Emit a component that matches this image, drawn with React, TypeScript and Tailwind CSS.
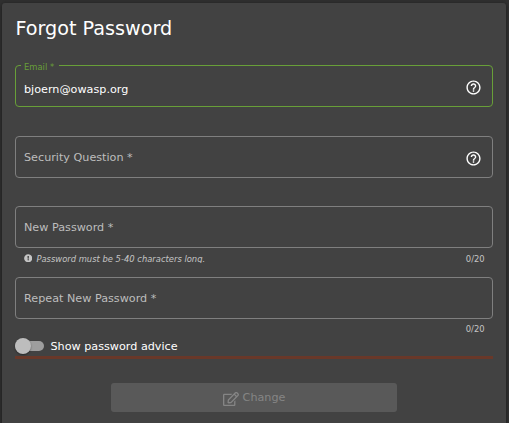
import type { ReactNode } from "react";
import { MdHelpOutline } from "react-icons/md";
import { FaExclamationCircle, FaRegEdit } from "react-icons/fa";

function Field({ children, help }: { children: ReactNode; help?: boolean }) {
  return (
    <div className="flex h-[42px] w-[478px] items-center justify-between rounded-[4px] border border-[#7f7f7f] pr-[10px] pl-2 text-[#bdbdbd]">
      <span className="pt-[2px] leading-4">{children}</span>
      {help && <MdHelpOutline className="mt-[3px] size-[17px] text-white" />}
    </div>
  );
}

export default function App() {
  return (
    <div className="flex h-[423px] w-[509px] overflow-hidden bg-[#303030] pt-[3px] pl-[2px] font-['DejaVu_Sans',sans-serif] text-[11.2px] text-white">
      <main className="flex h-[440px] w-[504px] flex-col rounded-t-[3px] bg-[#424242] pl-[13px] shadow-[0_1px_4px_#1a1a1a]">
        <h1 className="mt-[14px] h-6 pl-[0.4px] text-[19.2px] leading-6">Forgot Password</h1>

        <fieldset className="mt-[17px] h-[49px] w-[478px] rounded-[4px] border border-[#689f38] pl-[5px]">
          <legend className="h-[14px] w-[38px] pl-[3px] text-[8.4px] leading-[18px] text-[#689f38]">Email *</legend>
          <div className="flex h-[34px] items-start justify-between pt-[7px] pr-[10px] pl-[3px]">
            <span className="pt-[3px] leading-4">bjoern@owasp.org</span>
            <MdHelpOutline className="size-[17px]" />
          </div>
        </fieldset>

        <div className="mt-[29px]"><Field help>Security Question *</Field></div>
        <div className="mt-[28px]"><Field>New Password *</Field></div>
        <div className="mt-[5px] flex h-3 w-[478px] items-center pr-[8.4px] pl-[9px] text-[8.4px] leading-3 text-[#c5c5c5]">
          <FaExclamationCircle className="mr-1 mb-[1.6px] size-[8.4px]" />
          <em className="mt-px h-[9px] self-start overflow-hidden leading-[10px]">Password must be 5-40 characters long.</em>
          <span className="ml-auto">0/20</span>
        </div>

        <div className="mt-3"><Field>Repeat New Password *</Field></div>
        <div className="mt-1 h-3 w-[469.6px] text-right text-[8.4px] leading-3 text-[#c5c5c5]">0/20</div>

        <div className="mt-[3px] flex h-4 items-center">
          <div className="flex h-[10px] w-[29px] items-center rounded-full bg-[#9e9e9e]">
            <div className="size-4 shrink-0 rounded-full bg-[#bdbdbd] shadow-[0_1px_2px_#0006]" />
          </div>
          <span className="ml-[6.5px] pt-[2px] leading-4">Show password advice</span>
        </div>
        <div className="mt-[2px] h-[3px] w-[478px] bg-[#693829]" />

        <button disabled className="mt-6 ml-[96px] flex h-[29px] w-[286px] items-center justify-center rounded-[3px] bg-[#595959] text-[#858585]">
          <FaRegEdit className="mt-[2px] mr-1 size-4" />
          <span className="pt-px">Change</span>
        </button>
      </main>
    </div>
  );
}
